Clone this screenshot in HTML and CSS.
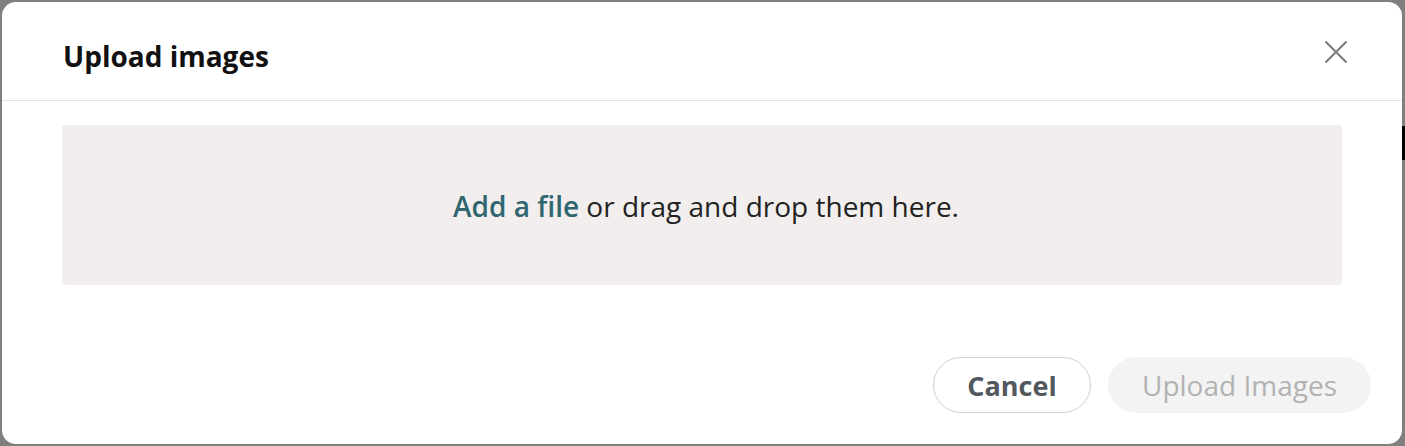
FILE: index.html
```html
<!DOCTYPE html>
<html lang="en">
<head>
<meta charset="utf-8">
<title>Upload images</title>
<link rel="stylesheet" href="styles.css">
</head>
<body>
<div class="backdrop">
  <div class="modal">
    <header class="modal-header">
      <h2 class="modal-title">Upload images</h2>
      <button class="close-btn" aria-label="Close">
        <svg width="24" height="24" viewBox="0 0 24 24"><path d="M1.5 1.5 L22.5 22.5 M22.5 1.5 L1.5 22.5" stroke="#7b7b7b" stroke-width="2" fill="none"/></svg>
      </button>
    </header>
    <div class="modal-body">
      <div class="dropzone">
        <p class="drop-text"><a class="add-link" href="#">Add a file</a> or drag and drop them here.</p>
      </div>
    </div>
    <footer class="modal-footer">
      <button class="btn btn-cancel">Cancel</button>
      <button class="btn btn-upload" disabled>Upload Images</button>
    </footer>
  </div>
  <div class="edge-mark"></div>
</div>
</body>
</html>
```
FILE: styles.css
```css
* { box-sizing: border-box; }
html, body { margin: 0; padding: 0; }
body {
  background: #7f7f7f;
  font-family: "Open Sans", "Liberation Sans", sans-serif;
  width: 1405px;
  height: 446px;
  overflow: hidden;
}
.backdrop {
  position: relative;
  padding: 2px 3px 2px 2px;
  height: 446px;
}
.modal {
  background: #fff;
  border-radius: 14px;
  height: 442px;
  display: flex;
  flex-direction: column;
}
.modal-header {
  height: 99px;
  border-bottom: 1px solid #e2e2e2;
  display: flex;
  align-items: center;
  justify-content: space-between;
  padding: 0 54px 0 61px;
}
.modal-title {
  margin: 0;
  font-size: 28px;
  font-weight: 700;
  color: #111;
  padding-top: 10px;
}
.close-btn {
  background: none;
  border: 0;
  padding: 0;
  width: 24px;
  height: 24px;
  cursor: pointer;
  display: flex;
  margin-top: 1px;
}
.modal-body {
  padding: 24px 60px 0 60px;
}
.dropzone {
  background: #f2eeed;
  border-radius: 4px;
  height: 160px;
  display: flex;
  align-items: center;
  justify-content: center;
}
.drop-text {
  margin: 0;
  font-size: 28px;
  color: #222;
  padding: 2px 0 0 8px;
}
.add-link {
  color: #2f6670;
  font-weight: 600;
  text-decoration: none;
}
.modal-footer {
  display: flex;
  justify-content: flex-end;
  gap: 17px;
  padding: 72px 31px 0 0;
}
.btn {
  height: 56px;
  border-radius: 28px;
  font-family: inherit;
  font-size: 28px;
  padding: 0;
}
.btn-cancel {
  background: #fff;
  border: 1.5px solid #cfcfcf;
  color: #52585e;
  font-weight: 700;
  font-size: 27px;
  width: 158px;
}
.btn-upload {
  background: #f3f3f3;
  border: 0;
  color: #b2b2b2;
  width: 263px;
}
.edge-mark {
  position: absolute;
  right: 0;
  top: 126px;
  width: 3px;
  height: 34px;
  background: #000;
}
```
